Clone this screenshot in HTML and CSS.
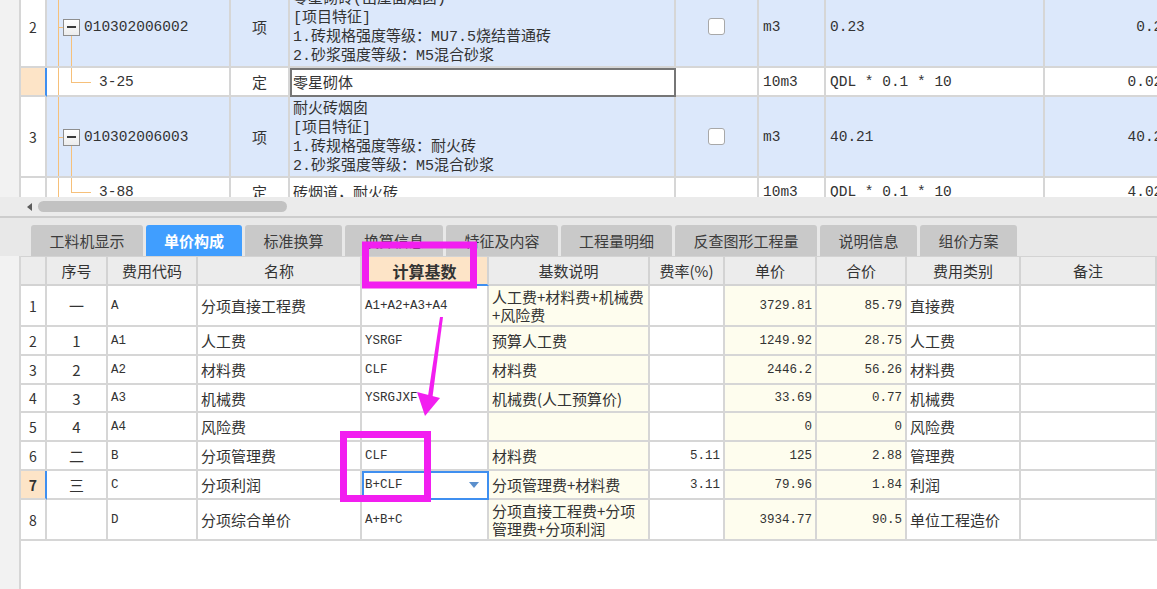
FILE: index.html
```html
<!DOCTYPE html>
<html lang="zh-CN">
<head>
<meta charset="utf-8">
<title>单价构成</title>
<link rel="stylesheet" href="styles.css">
</head>
<body>
<div class="app">
  <div class="pane pane-top">
    <div class="strip"></div>
    <div class="tg-view">
      <div class="tg">
        <!-- row 2 -->
        <div class="c rn">2</div>
        <div class="c tree hl"><span class="vl"></span><span class="stub"></span><span class="box"><span class="minus"></span></span><span class="down"></span><span class="code">010302006002</span></div>
        <div class="c ctr hl">项</div>
        <div class="c name hl"><div class="lines">零星砌砖(出屋面烟囱)<br>[项目特征]<br>1.砖规格强度等级：MU7.5烧结普通砖<br>2.砂浆强度等级：M5混合砂浆</div></div>
        <div class="c ctr hl"><span class="chk"></span></div>
        <div class="c mono hl">m3</div>
        <div class="c mono hl">0.23</div>
        <div class="c mono rt hl">0.23</div>
        <!-- row 3-25 -->
        <div class="c rn cur">&nbsp;</div>
        <div class="c tree"><span class="vl"></span><span class="up"></span><span class="elbow"></span><span class="code child">3-25</span></div>
        <div class="c ctr">定</div>
        <div class="c name edit">零星砌体</div>
        <div class="c"></div>
        <div class="c mono">10m3</div>
        <div class="c mono">QDL * 0.1 * 10</div>
        <div class="c mono rt">0.023</div>
        <!-- row 3 -->
        <div class="c rn">3</div>
        <div class="c tree hl"><span class="vl"></span><span class="stub"></span><span class="box"><span class="minus"></span></span><span class="down"></span><span class="code">010302006003</span></div>
        <div class="c ctr hl">项</div>
        <div class="c name hl"><div class="lines">耐火砖烟囱<br>[项目特征]<br>1.砖规格强度等级：耐火砖<br>2.砂浆强度等级：M5混合砂浆</div></div>
        <div class="c ctr hl"><span class="chk"></span></div>
        <div class="c mono hl">m3</div>
        <div class="c mono hl">40.21</div>
        <div class="c mono rt hl">40.21</div>
        <!-- row 3-88 -->
        <div class="c rn">&nbsp;</div>
        <div class="c tree"><span class="vl"></span><span class="up"></span><span class="elbow"></span><span class="code child">3-88</span></div>
        <div class="c ctr">定</div>
        <div class="c name">砖烟道，耐火砖</div>
        <div class="c"></div>
        <div class="c mono">10m3</div>
        <div class="c mono">QDL * 0.1 * 10</div>
        <div class="c mono rt">4.021</div>
      </div>
    </div>
  </div>

  <div class="hscroll">
    <span class="hs-arrow"></span>
    <span class="hs-thumb"></span>
  </div>

  <div class="tabbar">
    <div class="tab">工料机显示</div>
    <div class="tab active">单价构成</div>
    <div class="tab">标准换算</div>
    <div class="tab">换算信息</div>
    <div class="tab">特征及内容</div>
    <div class="tab">工程量明细</div>
    <div class="tab">反查图形工程量</div>
    <div class="tab">说明信息</div>
    <div class="tab">组价方案</div>
  </div>

  <div class="pane pane-bottom">
    <div class="strip"></div>
    <div class="bg-view">
      <div class="bg">
        <div class="h"></div>
        <div class="h">序号</div>
        <div class="h">费用代码</div>
        <div class="h">名称</div>
        <div class="h hsel">计算基数</div>
        <div class="h">基数说明</div>
        <div class="h">费率(%)</div>
        <div class="h">单价</div>
        <div class="h">合价</div>
        <div class="h">费用类别</div>
        <div class="h">备注</div>

        <div class="d num">1</div><div class="d ctr">一</div><div class="d sm">A</div><div class="d">分项直接工程费</div><div class="d sm">A1+A2+A3+A4</div><div class="d yl two">人工费+材料费+机械费<br>+风险费</div><div class="d rt sm"></div><div class="d yl rt sm">3729.81</div><div class="d yl rt sm">85.79</div><div class="d">直接费</div><div class="d"></div>

        <div class="d num">2</div><div class="d ctr">1</div><div class="d sm">A1</div><div class="d">人工费</div><div class="d sm">YSRGF</div><div class="d yl">预算人工费</div><div class="d rt sm"></div><div class="d yl rt sm">1249.92</div><div class="d yl rt sm">28.75</div><div class="d">人工费</div><div class="d"></div>

        <div class="d num">3</div><div class="d ctr">2</div><div class="d sm">A2</div><div class="d">材料费</div><div class="d sm">CLF</div><div class="d yl">材料费</div><div class="d rt sm"></div><div class="d yl rt sm">2446.2</div><div class="d yl rt sm">56.26</div><div class="d">材料费</div><div class="d"></div>

        <div class="d num">4</div><div class="d ctr">3</div><div class="d sm">A3</div><div class="d">机械费</div><div class="d sm">YSRGJXF</div><div class="d yl">机械费(人工预算价)</div><div class="d rt sm"></div><div class="d yl rt sm">33.69</div><div class="d yl rt sm">0.77</div><div class="d">机械费</div><div class="d"></div>

        <div class="d num">5</div><div class="d ctr">4</div><div class="d sm">A4</div><div class="d">风险费</div><div class="d sm"></div><div class="d yl"></div><div class="d rt sm"></div><div class="d yl rt sm">0</div><div class="d yl rt sm">0</div><div class="d">风险费</div><div class="d"></div>

        <div class="d num">6</div><div class="d ctr">二</div><div class="d sm">B</div><div class="d">分项管理费</div><div class="d sm">CLF</div><div class="d yl">材料费</div><div class="d rt sm">5.11</div><div class="d yl rt sm">125</div><div class="d yl rt sm">2.88</div><div class="d">管理费</div><div class="d"></div>

        <div class="d num cur">7</div><div class="d ctr">三</div><div class="d sm">C</div><div class="d">分项利润</div><div class="d sm editor">B+CLF<span class="dd"></span></div><div class="d yl">分项管理费+材料费</div><div class="d rt sm">3.11</div><div class="d yl rt sm">79.96</div><div class="d yl rt sm">1.84</div><div class="d">利润</div><div class="d"></div>

        <div class="d num">8</div><div class="d ctr"></div><div class="d sm">D</div><div class="d">分项综合单价</div><div class="d sm">A+B+C</div><div class="d yl two">分项直接工程费+分项<br>管理费+分项利润</div><div class="d rt sm"></div><div class="d yl rt sm">3934.77</div><div class="d yl rt sm">90.5</div><div class="d">单位工程造价</div><div class="d"></div>
      </div>
    </div>
  </div>

  <svg class="annot" width="1157" height="589" viewBox="0 0 1157 589" aria-hidden="true">
    <rect x="365.5" y="245" width="108" height="40" fill="none" stroke="#f21ef0" stroke-width="7"/>
    <polygon points="440,317 443,317 432.5,397 428,396" fill="#f21ef0"/>
    <polygon points="417,392 440,398 425,416" fill="#f21ef0"/>
    <rect x="343.5" y="434.5" width="84" height="64" fill="none" stroke="#f21ef0" stroke-width="7"/>
  </svg>
</div>
</body>
</html>
```

FILE: styles.css
```css
* { box-sizing: border-box; }

html, body {
  margin: 0;
  padding: 0;
}

body {
  width: 1157px;
  height: 589px;
  overflow: hidden;
  background: #ffffff;
  color: #333333;
  font-family: "Noto Sans CJK SC", "Liberation Sans", sans-serif;
}

.app {
  position: relative;
  width: 1157px;
  height: 589px;
  display: flex;
  flex-direction: column;
}

.pane { display: flex; }
.pane-top { height: 197px; flex: none; }
.pane-bottom { flex: 1; }

.strip {
  width: 21px;
  flex: none;
  background: #f2f2f2;
  border-right: 2px solid #d6d6d6;
}

/* ---------- top grid ---------- */
.tg-view {
  flex: 1;
  overflow: hidden;
}

.tg {
  display: grid;
  grid-template-columns: 26px 184px 59px 386px 83px 67px 219px 131px;
  grid-template-rows: 81px 29px 81px 29px;
  width: max-content;
  margin-top: -13px;
  font-family: "Liberation Mono", "Noto Sans CJK SC", monospace;
  font-size: 15px;
}

.c {
  border-right: 2px solid #d6d6d6;
  border-bottom: 2px solid #d6d6d6;
  display: flex;
  align-items: center;
  padding: 0 3px;
  white-space: nowrap;
  overflow: hidden;
  background: #ffffff;
}

.c.hl { background: #dce8fb; }
.c.ctr { justify-content: center; font-family: "Noto Sans CJK SC", sans-serif; }
.c.rt { justify-content: flex-end; }
.c.mono { font-size: 14.5px; padding-left: 4px; }
.c.name { padding-left: 3px; }
.c.rn {
  justify-content: center;
  font-family: "Noto Sans CJK SC", sans-serif;
  font-size: 14px;
  padding: 0;
}
.c.rn.cur { background: #fde4c7; border-right-color: #3f8ff0; }

.lines { line-height: 19px; padding-top: 2px; }

.c.edit {
  outline: 2px solid #767676;
  outline-offset: -2px;
}

.chk {
  width: 17px;
  height: 17px;
  background: #ffffff;
  border: 1px solid #a8a8a8;
  border-radius: 3px;
}

/* tree connectors */
.tree { position: relative; padding: 0; }
.tree .vl {
  position: absolute;
  left: 11px; top: 0; bottom: 0;
  width: 1px;
  background: #f6c07a;
}
.tree .stub {
  position: absolute;
  left: 11px; top: 50%;
  width: 5px; height: 1px;
  background: #f6c07a;
}
.tree .box {
  position: absolute;
  left: 16px; top: 50%;
  width: 17px; height: 17px;
  margin-top: -8px;
  border: 1px solid #8e8e8e;
  background: linear-gradient(#ffffff, #ececec);
  display: flex;
  align-items: center;
  justify-content: center;
}
.tree .minus {
  width: 9px; height: 2px;
  background: #3a3a3a;
}
.tree .down {
  position: absolute;
  left: 24px; top: 50%; bottom: 0;
  margin-top: 9px;
  width: 1px;
  background: #f6c07a;
}
.tree .up {
  position: absolute;
  left: 24px; top: 0;
  height: 50%;
  width: 1px;
  background: #f6c07a;
}
.tree .elbow {
  position: absolute;
  left: 24px; top: 50%;
  width: 20px; height: 1px;
  background: #f6c07a;
}
.tree .code {
  margin-left: 37px;
  font-size: 14.5px;
}
.tree .code.child { margin-left: 52px; }

/* ---------- horizontal scrollbar ---------- */
.hscroll {
  height: 21px;
  flex: none;
  display: flex;
  align-items: center;
  padding-left: 27px;
  background: #ebebeb;
  border-bottom: 2px solid #cdcdcd;
}
.hs-arrow {
  width: 0; height: 0;
  border-top: 4px solid transparent;
  border-bottom: 4px solid transparent;
  border-right: 5px solid #5c5c5c;
}
.hs-thumb {
  margin-left: 6px;
  width: 249px;
  height: 11px;
  border-radius: 6px;
  background: #c2c2c2;
}

/* ---------- tabs ---------- */
.tabbar {
  height: 38px;
  flex: none;
  display: flex;
  align-items: flex-end;
  gap: 3px;
  padding-left: 31px;
  background: #e8e8e8;
}
.tab {
  height: 31px;
  display: flex;
  align-items: center;
  justify-content: center;
  background: #c9c9c9;
  color: #3c3c3c;
  font-size: 15px;
  border-radius: 3px 3px 0 0;
}
.tab:nth-child(1) { width: 112px; }
.tab:nth-child(2) { width: 96px; }
.tab:nth-child(3) { width: 97px; }
.tab:nth-child(4) { width: 98px; }
.tab:nth-child(5) { width: 112px; }
.tab:nth-child(6) { width: 111px; }
.tab:nth-child(7) { width: 142px; }
.tab:nth-child(8) { width: 97px; }
.tab:nth-child(9) { width: 97px; }
.tab.active {
  background: #409eff;
  color: #ffffff;
  font-weight: bold;
}

/* ---------- bottom grid ---------- */
.bg-view {
  flex: 1;
  overflow: hidden;
}
.bg {
  display: grid;
  grid-template-columns: 26px 61px 90px 164px 127px 161px 75px 92px 90px 114px 136px;
  grid-template-rows: 30px 41px 29px 29px 28px 29px 29px 29px 41px;
  font-size: 15px;
}

.h {
  background: #ececec;
  border-top: 1px solid #d3d3d3;
  border-right: 2px solid #d3d3d3;
  border-bottom: 2px solid #d3d3d3;
  display: flex;
  align-items: center;
  justify-content: center;
  color: #333333;
  white-space: nowrap;
}
.h.hsel {
  background: #fde4c7;
  font-weight: bold;
  font-size: 16px;
  border-bottom-color: #3f8ff0;
}

.d {
  border-right: 2px solid #d6d6d6;
  border-bottom: 2px solid #d6d6d6;
  display: flex;
  align-items: center;
  padding: 0 3px;
  white-space: nowrap;
  background: #ffffff;
  position: relative;
}
.d.ctr { justify-content: center; }
.d.num { justify-content: center; font-size: 14px; padding: 0; }
.d.num.cur {
  background: #fde4c7;
  font-weight: bold;
  border-right-color: #3f8ff0;
}
.d.sm {
  font-family: "Liberation Mono", "Noto Sans CJK SC", monospace;
  font-size: 12.5px;
}
.d.rt { justify-content: flex-end; }
.d.yl { background: #fefdee; }
.d.two { line-height: 18px; }

.d.editor {
  outline: 2px solid #3f8ff0;
  outline-offset: -2px;
  padding-left: 3px;
}
.dd {
  margin-left: auto;
  margin-right: 5px;
  width: 0; height: 0;
  border-left: 5px solid transparent;
  border-right: 5px solid transparent;
  border-top: 6px solid #5b8fcc;
}

/* ---------- annotation overlay ---------- */
.annot {
  position: absolute;
  left: 0;
  top: 0;
  pointer-events: none;
}
```
